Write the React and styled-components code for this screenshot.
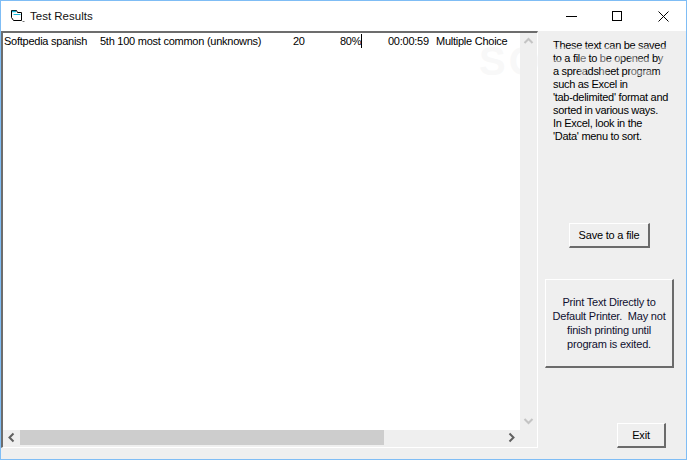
import styled, { createGlobalStyle } from "styled-components";

const GlobalStyle = createGlobalStyle`
  html, body {
    margin: 0;
    padding: 0;
    background: #fff;
  }
  body {
    font-family: "Liberation Sans", Arial, sans-serif;
    color: #000;
  }
`;

const Frame = styled.div`
  position: relative;
  box-sizing: border-box;
  width: 687px;
  height: 460px;
  border: 1px solid #7fbdf5;
  background: #fff;
  display: flex;
  flex-direction: column;
  overflow: hidden;
`;

const TitleBar = styled.div`
  height: 30px;
  flex: none;
  display: flex;
  align-items: center;
  background: #fff;
`;

const TitleIcon = styled.svg`
  width: 16px;
  height: 16px;
  margin-left: 9px;
  flex: none;
`;

const TitleText = styled.div`
  margin-left: 4px;
  font-size: 11.5px;
  color: #111;
  flex: 1;
`;

const WindowButton = styled.div`
  width: 46px;
  height: 30px;
  display: flex;
  align-items: center;
  justify-content: center;
  flex: none;
  svg {
    display: block;
  }
`;

const Client = styled.div`
  flex: 1;
  display: flex;
  background: #efefef;
  min-height: 0;
`;

const TextBox = styled.div`
  width: 537px;
  flex: none;
  margin-bottom: 11px;
  box-sizing: border-box;
  border-top: 2px solid #6d6d6d;
  border-left: 2px solid #6d6d6d;
  border-right: 1px solid #fff;
  border-bottom: 1px solid #fff;
  display: grid;
  grid-template-columns: 1fr 17px;
  grid-template-rows: 1fr 17px;
`;

const TextArea = styled.div`
  background: #fff;
  min-width: 0;
  padding-top: 1px;
`;

const ResultRow = styled.div`
  display: flex;
  height: 14px;
  font-size: 11px;
  letter-spacing: -0.25px;
  line-height: 14px;
  white-space: nowrap;
  padding-left: 1px;
`;

const Cell = styled.span`
  flex: none;
  width: ${(p) => p.$w}px;
`;

const Caret = styled.span`
  display: inline-block;
  width: 1px;
  height: 14px;
  background: #000;
  vertical-align: top;
`;

const VScroll = styled.div`
  background: #efefef;
  grid-row: 1 / 3;
  grid-column: 2;
  display: flex;
  flex-direction: column;
  justify-content: space-between;
  align-items: center;
  padding: 3px 0 21px;
`;

const HScroll = styled.div`
  display: flex;
  align-items: flex-start;
  background: #efefef;
`;

const ArrowSlot = styled.div`
  width: 17px;
  height: 15px;
  flex: none;
  display: flex;
  align-items: center;
  justify-content: center;
`;

const Thumb = styled.div`
  width: 364px;
  height: 15px;
  background: #cdcdcd;
  flex: none;
`;

const Track = styled.div`
  flex: 1;
`;

const SidePanel = styled.div`
  flex: 1;
  min-width: 0;
  display: flex;
  flex-direction: column;
`;

const HelpText = styled.div`
  margin: 8px 0 0 15px;
  font-size: 11px;
  letter-spacing: -0.3px;
  line-height: 13px;
  white-space: pre;
`;

const PanelButton = styled.div`
  box-sizing: border-box;
  width: ${(p) => p.$w}px;
  height: ${(p) => p.$h}px;
  margin-left: ${(p) => p.$left}px;
  margin-top: ${(p) => p.$top}px;
  display: flex;
  align-items: center;
  justify-content: center;
  text-align: center;
  font-size: 11px;
  letter-spacing: -0.2px;
  line-height: 14px;
  background: #efefef;
  color: ${(p) => p.$color || "#000"};
  border-top: 1px solid #fff;
  border-left: 1px solid #fff;
  border-right: 2px solid #6b6b6b;
  border-bottom: 2px solid #6b6b6b;
  white-space: pre;
`;

const Watermark = styled.div`
  position: absolute;
  left: 478px;
  top: 38px;
  font-size: 40px;
  font-weight: 700;
  letter-spacing: 3px;
  color: rgba(240, 240, 240, 0.45);
  white-space: nowrap;
  pointer-events: none;
`;

const Chevron = ({ d, color }) => (
  <svg width="11" height="11" viewBox="0 0 11 11">
    <path d={d} fill="none" stroke={color} strokeWidth="2" />
  </svg>
);

const App = () => {
  return (
    <Frame>
      <GlobalStyle />
      <TitleBar>
        <TitleIcon viewBox="0 0 16 16">
          <path d="M1.5 2.5h5l1 2h4v8h-8l-2-3z" fill="#fff" stroke="#000" strokeWidth="1" />
          <path d="M2 3.5h4" stroke="#19b8d8" strokeWidth="1.5" />
          <path d="M3.5 6.5h7" stroke="#19b8d8" strokeWidth="1" />
          <path d="M12.5 13.5h2" stroke="#777" strokeWidth="1" />
        </TitleIcon>
        <TitleText>Test Results</TitleText>
        <WindowButton>
          <svg width="11" height="11" viewBox="0 0 11 11">
            <path d="M0 5.5h11" stroke="#000" strokeWidth="1" />
          </svg>
        </WindowButton>
        <WindowButton>
          <svg width="10" height="10" viewBox="0 0 10 10">
            <rect x="0.5" y="0.5" width="9" height="9" fill="none" stroke="#000" />
          </svg>
        </WindowButton>
        <WindowButton>
          <svg width="11" height="11" viewBox="0 0 11 11">
            <path d="M0.5 0.5l10 10M10.5 0.5l-10 10" stroke="#000" strokeWidth="1" />
          </svg>
        </WindowButton>
      </TitleBar>
      <Client>
        <TextBox>
          <TextArea>
            <ResultRow>
              <Cell $w={96}>Softpedia spanish</Cell>
              <Cell $w={193}>5th 100 most common (unknowns)</Cell>
              <Cell $w={47}>20</Cell>
              <Cell $w={48}>
                80%
                <Caret />
              </Cell>
              <Cell $w={48}>00:00:59</Cell>
              <Cell $w={80}>Multiple Choice</Cell>
            </ResultRow>
          </TextArea>
          <VScroll>
            <Chevron d="M1.5 7l4-4 4 4" color="#c4c4c4" />
            <Chevron d="M1.5 4l4 4 4-4" color="#c4c4c4" />
          </VScroll>
          <HScroll>
            <ArrowSlot>
              <Chevron d="M7.5 1.5l-4 4 4 4" color="#606060" />
            </ArrowSlot>
            <Thumb />
            <Track />
            <ArrowSlot>
              <Chevron d="M3.5 1.5l4 4-4 4" color="#606060" />
            </ArrowSlot>
          </HScroll>
        </TextBox>
        <SidePanel>
          <HelpText>{`These text can be saved
to a file to be opened by
a spreadsheet program
such as Excel in
'tab-delimited' format and
sorted in various ways.
In Excel, look in the
'Data' menu to sort.`}</HelpText>
          <PanelButton $w={81} $h={25} $left={31} $top={80}>Save to a file</PanelButton>
          <PanelButton $w={129} $h={89} $left={7} $top={31} $color="#101030">{`Print Text Directly to
Default Printer.  May not
finish printing until
program is exited.`}</PanelButton>
          <PanelButton $w={49} $h={25} $left={79} $top={55}>Exit</PanelButton>
        </SidePanel>
      </Client>
      <Watermark>SOFTPEDIA</Watermark>
    </Frame>
  );
};

export default App;
